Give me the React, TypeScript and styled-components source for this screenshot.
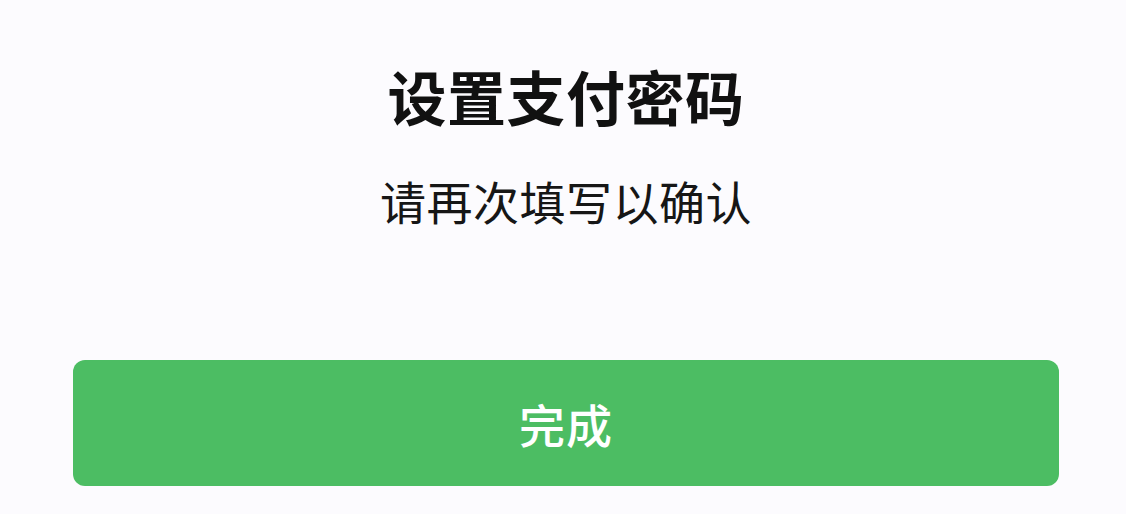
import React from "react";
import styled, { createGlobalStyle } from "styled-components";

const GlobalStyle = createGlobalStyle`
  html, body {
    margin: 0;
    padding: 0;
    background: #fcfbfe;
  }
  body {
    font-family: "Noto Sans CJK SC", "Noto Sans", sans-serif;
  }
`;

const Page = styled.main`
  width: 1126px;
  height: 514px;
  box-sizing: border-box;
  padding: 63px 67px 0 73px;
  display: flex;
  flex-direction: column;
  align-items: center;
  overflow: hidden;
`;

const Title = styled.h1`
  margin: 0;
  font-size: 59px;
  font-weight: 700;
  line-height: 66px;
  color: #111111;
  letter-spacing: 0.5px;
`;

const Subtitle = styled.p`
  margin: 46px 0 0;
  font-size: 46px;
  font-weight: 400;
  line-height: 50px;
  color: #161616;
  letter-spacing: 0.5px;
`;

const DoneButton = styled.button`
  margin-top: 135px;
  width: 100%;
  height: 126px;
  border: none;
  border-radius: 12px;
  background: #4cbd63;
  color: #ffffff;
  font-family: "Noto Sans CJK SC", "Noto Sans", sans-serif;
  font-size: 46px;
  font-weight: 500;
  letter-spacing: 1px;
  cursor: pointer;
`;

const App: React.FC = () => {
  return (
    <>
      <GlobalStyle />
      <Page>
        <Title>设置支付密码</Title>
        <Subtitle>请再次填写以确认</Subtitle>
        <DoneButton>完成</DoneButton>
      </Page>
    </>
  );
};

export default App;
